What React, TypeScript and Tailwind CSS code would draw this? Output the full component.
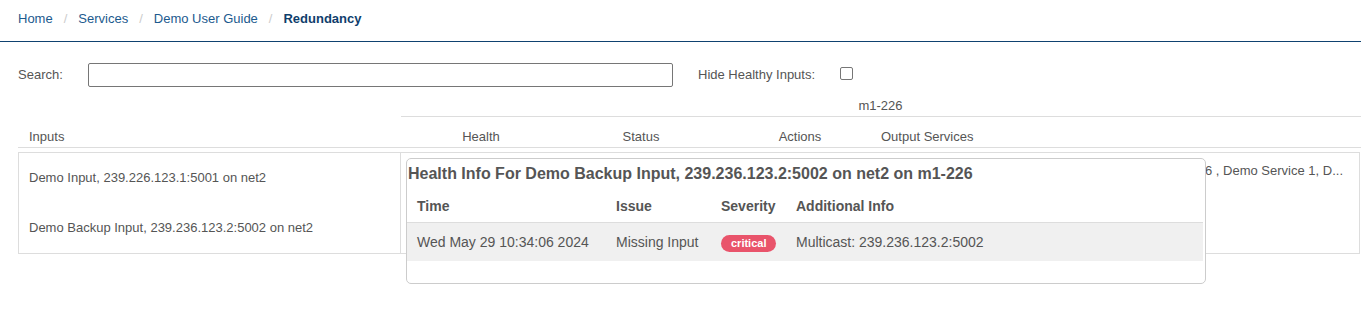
import React from "react";

// -----------------------------------------------------------------------------
// Static data
// -----------------------------------------------------------------------------
const crumbs = ["Home", "Services", "Demo User Guide"];

const inputs = [
  "Demo Input, 239.226.123.1:5001 on net2",
  "Demo Backup Input, 239.236.123.2:5002 on net2"
];

const healthIssues = [
  {
    time: "Wed May 29 10:34:06 2024",
    issue: "Missing Input",
    severity: "critical",
    info: "Multicast: 239.236.123.2:5002"
  }
];

// -----------------------------------------------------------------------------
// Pieces
// -----------------------------------------------------------------------------
function Breadcrumb() {
  return (
    <nav className="h-[42px] border-b border-[#0f4270] flex items-center pl-[18px] pb-[4px]">
      {crumbs.map((c) => (
        <React.Fragment key={c}>
          <a className="text-[#1c5a8e] leading-[16px]">{c}</a>
          <span className="px-[11px] text-[#ccc] leading-[16px]">/</span>
        </React.Fragment>
      ))}
      <span className="font-bold text-[#0f3e6c] leading-[16px]">Redundancy</span>
    </nav>
  );
}

function Toolbar() {
  return (
    <div className="mt-[21px] h-[24px] flex items-center pl-[18px]">
      <label className="w-[70px] leading-[16px]">Search:</label>
      <div className="w-[585px] h-[24px] border border-[#767676] rounded-[2px] bg-white" />
      <span className="ml-[25px] leading-[16px]">Hide Healthy Inputs:</span>
      <div className="ml-[25px] self-start mt-[4px] w-[13px] h-[13px] border border-[#767676] rounded-[2px] bg-white" />
    </div>
  );
}

function HealthPopover() {
  return (
    <div className="absolute left-[406px] top-[158px] w-[800px] h-[126px] border border-[#ccc] rounded-[5px] bg-white">
      <div className="pl-[1px] pt-[6px] text-[16px] font-bold leading-[18px] text-[#555]">
        Health Info For Demo Backup Input, 239.236.123.2:5002 on net2 on m1-226
      </div>
      <div className="mt-[8px] w-[796px] text-[14px]">
        <div className="h-[32px] flex items-center border-b border-[#ddd] font-bold">
          <div className="w-[199px] pl-[10px]">Time</div>
          <div className="w-[105px] pl-[10px]">Issue</div>
          <div className="w-[75px] pl-[10px]">Severity</div>
          <div className="flex-1 pl-[10px]">Additional Info</div>
        </div>
        {healthIssues.map((row) => (
          <div key={row.time} className="h-[38px] flex items-center bg-[#f0f0f0]">
            <div className="w-[199px] pl-[10px]">{row.time}</div>
            <div className="w-[105px] pl-[10px]">{row.issue}</div>
            <div className="w-[75px] pl-[10px]">
              <span className="inline-block h-[17px] px-[10px] rounded-full bg-[#e9546b] text-white text-[11px] font-bold leading-[17px]">
                {row.severity}
              </span>
            </div>
            <div className="flex-1 pl-[10px]">{row.info}</div>
          </div>
        ))}
      </div>
    </div>
  );
}

function RedundancyTable() {
  return (
    <div className="pl-[18px]">
      {/* Group header */}
      <div className="flex h-[30px]">
        <div className="w-[383px]" />
        <div className="flex-1 border-b border-[#ddd] flex items-end justify-center pb-[2px]">
          <span className="leading-[16px] -ml-[1px]">m1-226</span>
        </div>
      </div>
      {/* Column headers */}
      <div className="flex h-[31px] border-b border-[#ddd] pt-[12px] leading-[16px]">
        <div className="w-[383px] pl-[11px]">Inputs</div>
        <div className="w-[160px] text-center">Health</div>
        <div className="w-[160px] text-center">Status</div>
        <div className="w-[158px] text-center">Actions</div>
        <div className="flex-1 pl-[2px]">Output Services</div>
      </div>
      {/* Body */}
      <div className="mt-[4px] w-[1342px] border border-[#ddd] flex">
        <div className="w-[382px] border-r border-[#ddd]">
          {inputs.map((i) => (
            <div key={i} className="h-[50px] flex items-center pl-[10px] leading-[16px]">
              {i}
            </div>
          ))}
        </div>
        <div className="flex-1 flex h-[100px]">
          <div className="w-[478px]" />
          <div className="flex-1 overflow-hidden flex justify-end pr-[16px] pt-[10px] whitespace-nowrap leading-[16px]">
            <span>Demo Service m1-226 , Demo Service 1, D...</span>
          </div>
        </div>
      </div>
    </div>
  );
}

// -----------------------------------------------------------------------------
// Page
// -----------------------------------------------------------------------------
export default function App() {
  return (
    <div className="relative w-[1361px] h-[321px] overflow-hidden bg-white font-['Liberation_Sans',Arial,sans-serif] text-[13px] text-[#555]">
      <Breadcrumb />
      <Toolbar />
      <RedundancyTable />
      <HealthPopover />
    </div>
  );
}
